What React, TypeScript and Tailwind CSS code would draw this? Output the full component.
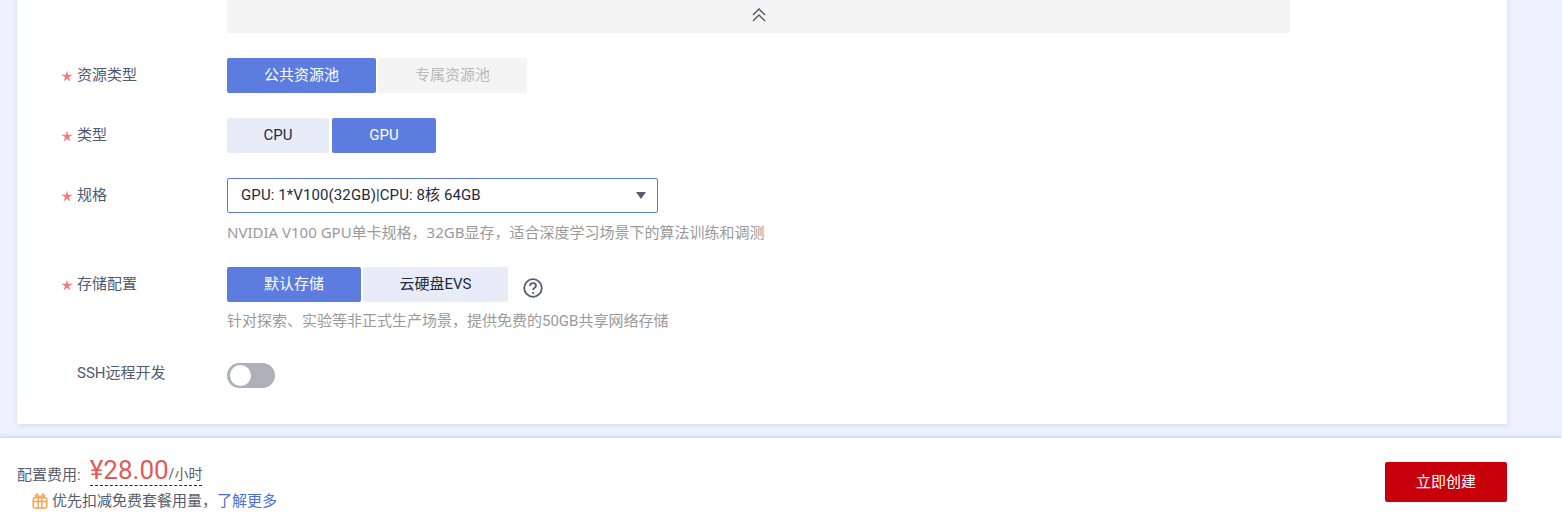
import React, { ReactNode } from 'react';

const FONT = "font-['Roboto','Noto_Sans_CJK_SC',sans-serif]";

const Label: React.FC<{ text: string }> = ({ text }) => (
  <div className="w-[166px] h-[35px] flex items-center shrink-0 text-[15px] text-[#4f5a70]">
    <span className="w-4">
      <svg width="12" height="12" viewBox="0 0 12 12" className="mt-px">
        <path d="M6 .4 7.1 4.7H11.8L7.9 7.2 9.5 11.6 6 8.8 2.5 11.6 4.1 7.2 .2 4.7H4.9z" fill="#f77b76" />
      </svg>
    </span>
    <span className="-mt-px">{text}</span>
  </div>
);

const Seg: React.FC<{ w: string; active?: boolean; disabled?: boolean; children: ReactNode }> = ({
  w,
  active,
  disabled,
  children,
}) => (
  <div
    className={`${w} h-[35px] flex items-center justify-center text-[15px] rounded-[2px] ${
      active
        ? 'bg-[#5d7ce0] text-white'
        : disabled
          ? 'bg-[#f4f4f4] text-[#b9b9b9]'
          : 'bg-[#e8ecf8] text-[#252b3a]'
    }`}
  >
    {children}
  </div>
);

const Hint: React.FC<{ className?: string; children: ReactNode }> = ({ className = '', children }) => (
  <div className={`mt-[9px] text-[15px] leading-5 text-[#9a9a9a] whitespace-nowrap ${className}`}>{children}</div>
);

export default function App() {
  return (
    <div className={`${FONT} w-[1562px] h-[513px] overflow-hidden bg-[#eef1fe] flex flex-col`}>
      <div className="h-[438px] px-[17px] shrink-0">
        <div className="w-[1490px] h-[424px] bg-white shadow-[0_1px_6px_rgba(90,110,180,0.18)] pl-[44px]">
          <div className="ml-[166px] w-[1063px] h-[33px] bg-[#f4f4f4] flex justify-center pt-[8px]">
            <svg width="14" height="14" viewBox="0 0 14 14" fill="none" stroke="#575d6c" strokeWidth="1.5">
              <path d="M1 7 7 1l6 6M1 13l6-6 6 6" />
            </svg>
          </div>

          <div className="mt-[25px] flex">
            <Label text="资源类型" />
            <div className="flex gap-[2px]">
              <Seg w="w-[149px]" active>公共资源池</Seg>
              <Seg w="w-[149px]" disabled>专属资源池</Seg>
            </div>
          </div>

          <div className="mt-[25px] flex">
            <Label text="类型" />
            <div className="flex gap-[3px]">
              <Seg w="w-[102px]">CPU</Seg>
              <Seg w="w-[104px]" active>GPU</Seg>
            </div>
          </div>

          <div className="mt-[25px] flex">
            <Label text="规格" />
            <div>
              <div className="w-[431px] h-[35px] border border-[#5d7ce0] rounded-[2px] pl-[13px] pr-[11px] flex items-center justify-between text-[15px] text-[#252b3a]">
                <span className="tracking-[0.1px]">GPU: 1*V100(32GB)|CPU: 8核 64GB</span>
                <svg width="10" height="7" viewBox="0 0 10 7" className="-mt-px">
                  <path d="M0 0h10L5 7z" fill="#575d6c" />
                </svg>
              </div>
              <Hint className="font-['Noto_Sans','Noto_Sans_CJK_SC',sans-serif]">
                NVIDIA V100 GPU单卡规格，32GB显存，适合深度学习场景下的算法训练和调测
              </Hint>
            </div>
          </div>

          <div className="mt-[25px] flex">
            <Label text="存储配置" />
            <div>
              <div className="flex items-start">
                <div className="flex gap-[2px]">
                  <Seg w="w-[134px]" active>默认存储</Seg>
                  <Seg w="w-[145px]">云硬盘EVS</Seg>
                </div>
                <svg width="20" height="20" viewBox="0 0 20 20" className="ml-[15px] mt-[11px]">
                  <circle cx="10" cy="10" r="8.8" fill="none" stroke="#575d6c" strokeWidth="1.8" />
                  <path
                    d="M7 8c0-1.8 1.3-2.9 3-2.9s3 1.1 3 2.5c0 1.2-.7 1.8-1.6 2.4-.9.6-1.3 1.1-1.3 2.1"
                    fill="none"
                    stroke="#575d6c"
                    strokeWidth="1.8"
                  />
                  <circle cx="10.1" cy="15" r="1.1" fill="#575d6c" />
                </svg>
              </div>
              <Hint>针对探索、实验等非正式生产场景，提供免费的50GB共享网络存储</Hint>
            </div>
          </div>

          <div className="mt-[32px] flex items-center h-[25px]">
            <div className="w-[166px] flex text-[15px] text-[#4f5a70] -mt-[4px]">
              <span className="w-4" />
              <span>SSH远程开发</span>
            </div>
            <div className="w-12 h-[25px] rounded-full bg-[#adb0b8] py-[2px] pl-[3px]">
              <div className="w-[21px] h-[21px] rounded-full bg-white" />
            </div>
          </div>
        </div>
      </div>

      <div className="flex-1 bg-white shadow-[0_-1px_4px_rgba(90,100,150,0.25)] z-10 pl-[17px] pr-[55px] flex justify-between">
        <div className="pt-[19px]">
          <div className="flex items-end h-[29px]">
            <span className="text-[15px] leading-5 text-[#575d6c] mb-px">配置费用:</span>
            <div className="ml-[9px] flex items-baseline border-b border-dashed border-[#252b3a] h-[29px] leading-[27px]">
              <span className="text-[26px] text-[#e05a5a]">¥28.00</span>
              <span className="text-sm text-[#575d6c]">/小时</span>
            </div>
          </div>
          <div className="ml-[15px] mt-[5px] flex items-center text-[15px] leading-5 text-[#575d6c]">
            <svg width="16" height="16" viewBox="0 0 16 16" className="mr-1" fill="none" stroke="#f9a350" strokeWidth="1.5">
              <rect x="1.2" y="4.8" width="13.6" height="10.2" rx="1.6" />
              <path d="M1.2 8.4h13.6M6.2 4.8V15M9.8 4.8V15" />
              <path d="M8 4.6 5 1 3.4 2.8 6 4.6M8 4.6 11 1l1.6 1.8L10 4.6" />
            </svg>
            <span>优先扣减免费套餐用量，</span>
            <span className="text-[#4d6fd6]">了解更多</span>
          </div>
        </div>
        <div className="pt-6">
          <div className="w-[122px] h-10 rounded-[2px] bg-[#c7000b] text-white text-[15px] flex items-center justify-center">
            立即创建
          </div>
        </div>
      </div>
    </div>
  );
}
